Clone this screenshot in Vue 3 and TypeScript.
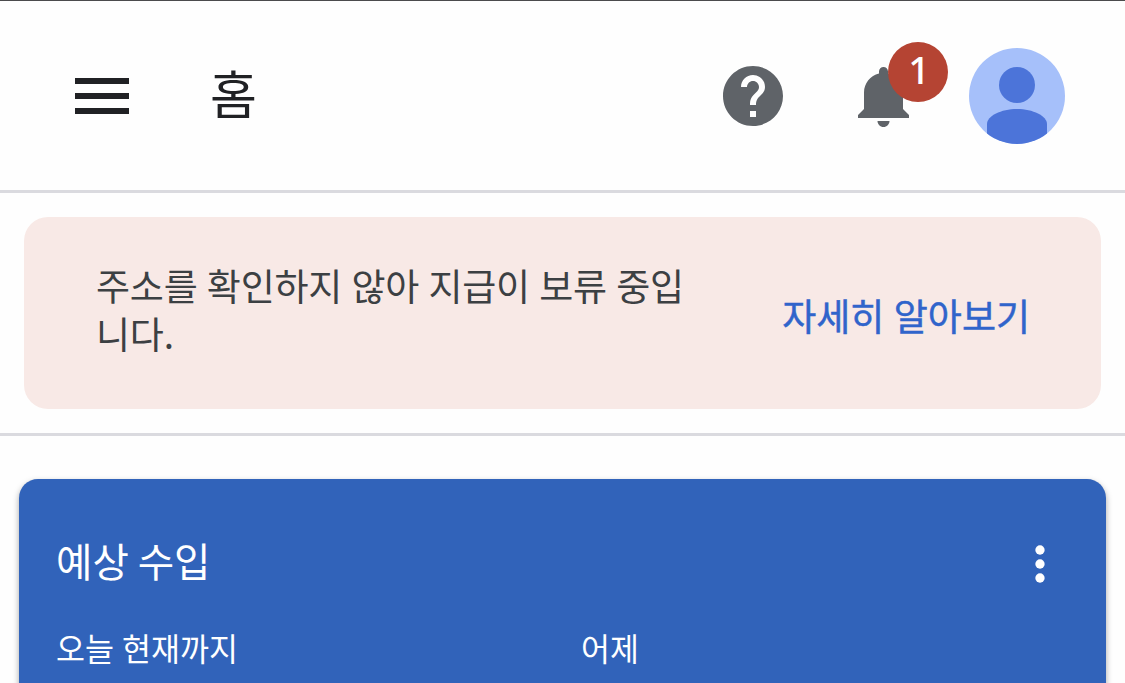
<script setup lang="ts">
interface Metric {
  id: string
  label: string
}

const title: string = '홈'
const unread: number = 1
const notice: string = '주소를 확인하지 않아 지급이 보류 중입니다.'
const metrics: Metric[] = [
  { id: 'today', label: '오늘 현재까지' },
  { id: 'yesterday', label: '어제' },
]
</script>

<template>
  <div class="screen">
    <header class="topbar">
      <button class="icon-btn menu" aria-label="메뉴">
        <svg width="54" height="36" viewBox="0 0 54 36" fill="#202124">
          <path d="M0 0h54v6H0zM0 15h54v6H0zM0 30h54v6H0z" />
        </svg>
      </button>
      <h1 class="title">{{ title }}</h1>
      <div class="actions">
        <button class="icon-btn help" aria-label="도움말">
          <svg width="72" height="72" viewBox="0 0 24 24" fill="#5f6368">
            <path d="M12 2C6.48 2 2 6.48 2 12s4.48 10 10 10 10-4.48 10-10S17.52 2 12 2zm1 17h-2v-2h2v2zm2.07-7.75l-.9.92C13.45 12.9 13 13.5 13 15h-2v-.5c0-1.1.45-2.1 1.17-2.83l1.24-1.26c.37-.36.59-.86.59-1.41 0-1.1-.9-2-2-2s-2 .9-2 2H8c0-2.21 1.79-4 4-4s4 1.79 4 4c0 .88-.36 1.68-.93 2.25z" />
          </svg>
        </button>
        <button class="icon-btn bell" aria-label="알림">
          <svg width="72" height="72" viewBox="0 0 24 24" fill="#5f6368">
            <path d="M11.5 22c1.1 0 2-.9 2-2h-4c0 1.1.9 2 2 2zm6.5-6v-5.5c0-3.07-2.13-5.64-5-6.32V3.5c0-.83-.67-1.5-1.5-1.5S10 2.67 10 3.5v.68c-2.87.68-5 3.25-5 6.32V16l-2 2v1h17v-1l-2-2z" />
          </svg>
          <span class="badge">{{ unread }}</span>
        </button>
        <button class="icon-btn avatar" aria-label="계정">
          <svg width="96" height="96" viewBox="0 0 96 96">
            <clipPath id="avatar-clip"><circle cx="48" cy="48" r="48" /></clipPath>
            <g clip-path="url(#avatar-clip)">
              <path fill="#a6c0fa" d="M0 0h96v96H0z" />
              <circle cx="48" cy="37" r="18" fill="#4c74d9" />
              <path fill="#4c74d9" d="M18 96V76C18 68 32 61 48 61s30 7 30 15v20z" />
            </g>
          </svg>
        </button>
      </div>
    </header>

    <section class="notice-wrap">
      <div class="notice">
        <p class="notice-text">{{ notice }}</p>
        <a class="notice-link">자세히 알아보기</a>
      </div>
    </section>

    <main class="content">
      <article class="card">
        <div class="card-head">
          <h2 class="card-title">예상 수입</h2>
          <svg class="more" width="56" height="56" viewBox="0 0 24 24" fill="#fff">
            <circle cx="12" cy="6" r="2" />
            <circle cx="12" cy="12" r="2" />
            <circle cx="12" cy="18" r="2" />
          </svg>
        </div>
        <div class="metrics">
          <div v-for="m in metrics" :key="m.id" class="metric">{{ m.label }}</div>
        </div>
      </article>
    </main>
  </div>
</template>

<style>
body {
  margin: 0;
  overflow: hidden;
  background: #fefefe;
}
</style>

<style scoped>
.screen {
  box-sizing: border-box;
  height: 683px;
  overflow: hidden;
  border-top: 1px solid #4b4b4d;
  background: #fefefe;
  font-family: "Noto Sans CJK KR", sans-serif;
  color: #202124;
}
.topbar {
  display: flex;
  align-items: center;
  box-sizing: border-box;
  height: 192px;
  padding: 0 60px 0 75px;
  border-bottom: 3px solid #dadadf;
}
.icon-btn {
  display: block;
  padding: 0;
  border: 0;
  background: none;
}
.icon-btn svg {
  display: block;
}
.menu {
  margin-top: 1px;
}
.title {
  margin: 0 0 7px 81px;
  font-size: 51px;
  font-weight: 400;
  line-height: 72px;
}
.actions {
  display: flex;
  align-items: center;
  margin-left: auto;
}
.help {
  margin-right: 60px;
}
.bell {
  position: relative;
  margin: 2px 48px 0 0;
}
.badge {
  position: absolute;
  left: 39px;
  top: -19px;
  box-sizing: border-box;
  width: 60px;
  height: 60px;
  padding-left: 2px;
  border-radius: 50%;
  background: #b54433;
  color: #fff;
  font: 500 38px/55px "Noto Sans", sans-serif;
  text-align: center;
}
.notice-wrap {
  padding: 24px;
  border-bottom: 3px solid #dadadf;
}
.notice {
  display: flex;
  align-items: center;
  justify-content: space-between;
  box-sizing: border-box;
  height: 192px;
  padding: 0 71px 0 72px;
  border-radius: 24px;
  background: #f8e9e6;
}
.notice-text {
  width: 600px;
  margin: 0 0 9px;
  color: #3c4043;
  font-size: 37px;
  line-height: 48px;
  letter-spacing: -0.2px;
  word-spacing: 1.2px;
  word-break: break-all;
}
.notice-link {
  margin-top: 3px;
  color: #3064cb;
  font-size: 37px;
  font-weight: 400;
  line-height: 48px;
  word-spacing: 1.2px;
  -webkit-text-stroke: 0.5px #3064cb;
  white-space: nowrap;
}
.content {
  padding: 43px 19px 0;
}
.card {
  box-sizing: border-box;
  height: 300px;
  padding: 57px 38px 0 37px;
  border-radius: 19px;
  background: #3163ba;
  color: #fff;
  box-shadow: 0 3px 6px rgba(0, 0, 0, 0.35);
}
.card-head {
  display: flex;
  align-items: center;
  justify-content: space-between;
  height: 56px;
}
.card-title {
  margin: 0 0 8px;
  font-size: 39.6px;
  font-weight: 400;
  line-height: 56px;
}
.metrics {
  display: grid;
  grid-template-columns: 525px 1fr;
  margin-top: 31px;
}
.metric {
  font-size: 31.5px;
  line-height: 48px;
  word-spacing: 1px;
}
</style>
